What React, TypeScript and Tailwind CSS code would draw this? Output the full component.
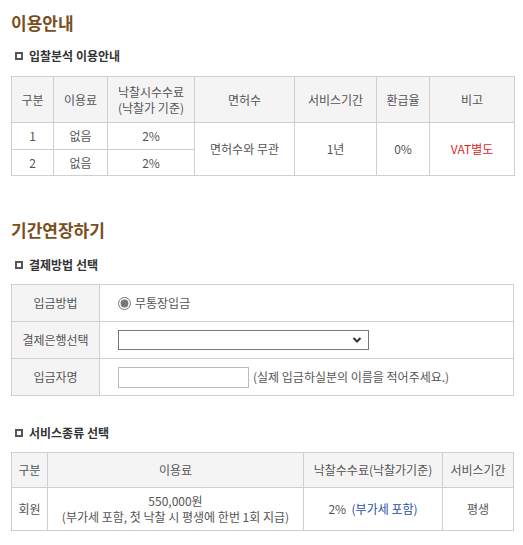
import React from 'react';

const th = 'border border-[#cfcfcf] bg-[#f4f4f4] font-normal text-[#555] text-center';
const td = 'border border-[#cfcfcf] text-[#555] text-center';

function SubTitle({ children }: { children: React.ReactNode }) {
  return (
    <div className="flex items-center gap-[6px] pl-[4px] text-[12px] font-bold text-[#333]">
      <span className="inline-block h-[8px] w-[8px] border-2 border-[#555]" />
      {children}
    </div>
  );
}

function Title({ children }: { children: React.ReactNode }) {
  return <h2 className="text-[17px] font-bold leading-[24px] text-[#7a4f1c]">{children}</h2>;
}

export default function App() {
  return (
    <div
      className="w-[523px] h-[545px] bg-white px-[11px] text-[12px]"
      style={{ fontFamily: '"Noto Sans CJK KR", "Noto Sans", sans-serif' }}
    >
      <div className="pt-[11px]">
        <Title>이용안내</Title>
      </div>
      <div className="mt-[12px]">
        <SubTitle>입찰분석 이용안내</SubTitle>
      </div>
      <table className="mt-[11px] w-[503px] border-collapse table-fixed">
        <colgroup>
          <col className="w-[42px]" />
          <col className="w-[54px]" />
          <col className="w-[87px]" />
          <col className="w-[100px]" />
          <col className="w-[82px]" />
          <col className="w-[53px]" />
          <col className="w-[85px]" />
        </colgroup>
        <thead>
          <tr className="h-[46px]">
            <th className={th}>구분</th>
            <th className={th}>이용료</th>
            <th className={`${th} leading-[16px]`}>
              낙찰시수수료
              <br />
              (낙찰가 기준)
            </th>
            <th className={th}>면허수</th>
            <th className={th}>서비스기간</th>
            <th className={th}>환급율</th>
            <th className={th}>비고</th>
          </tr>
        </thead>
        <tbody>
          <tr className="h-[27px]">
            <td className={td}>1</td>
            <td className={td}>없음</td>
            <td className={td}>2%</td>
            <td className={td} rowSpan={2}>면허수와 무관</td>
            <td className={td} rowSpan={2}>1년</td>
            <td className={td} rowSpan={2}>0%</td>
            <td className={`${td} text-[#e0262b]`} rowSpan={2}>VAT별도</td>
          </tr>
          <tr className="h-[26px]">
            <td className={td}>2</td>
            <td className={td}>없음</td>
            <td className={td}>2%</td>
          </tr>
        </tbody>
      </table>

      <div className="mt-[42px]">
        <Title>기간연장하기</Title>
      </div>
      <div className="mt-[14px]">
        <SubTitle>결제방법 선택</SubTitle>
      </div>
      <table className="mt-[10px] w-[503px] border-collapse table-fixed">
        <colgroup>
          <col className="w-[88px]" />
          <col />
        </colgroup>
        <tbody>
          <tr className="h-[37px]">
            <td className={th}>입금방법</td>
            <td className="border border-[#cfcfcf] pl-[18px] text-[#555]">
              <label className="flex items-center gap-[4px]">
                <input type="radio" defaultChecked className="m-0 h-[13px] w-[13px] accent-[#777]" />
                무통장입금
              </label>
            </td>
          </tr>
          <tr className="h-[37px]">
            <td className={th}>결제은행선택</td>
            <td className="border border-[#cfcfcf] pl-[18px]">
              <div className="relative h-[20px] w-[251px] border border-[#767676] bg-white">
                <svg
                  className="absolute right-[6px] top-[5px]"
                  width="10"
                  height="8"
                  viewBox="0 0 10 8"
                >
                  <path d="M1.5 2 L5 5.5 L8.5 2" stroke="#333" strokeWidth="2" fill="none" />
                </svg>
              </div>
            </td>
          </tr>
          <tr className="h-[37px]">
            <td className={th}>입금자명</td>
            <td className="border border-[#cfcfcf] pl-[18px] text-[#555]">
              <div className="flex items-center gap-[4px]">
                <input
                  type="text"
                  className="h-[21px] w-[131px] border border-[#bbb] bg-white outline-none"
                />
                <span>(실제 입금하실분의 이름을 적어주세요.)</span>
              </div>
            </td>
          </tr>
        </tbody>
      </table>

      <div className="mt-[28px]">
        <SubTitle>서비스종류 선택</SubTitle>
      </div>
      <table className="mt-[10px] w-[503px] border-collapse table-fixed">
        <colgroup>
          <col className="w-[36px]" />
          <col className="w-[256px]" />
          <col className="w-[139px]" />
          <col />
        </colgroup>
        <thead>
          <tr className="h-[35px]">
            <th className={th}>구분</th>
            <th className={th}>이용료</th>
            <th className={th}>낙찰수수료(낙찰가기준)</th>
            <th className={th}>서비스기간</th>
          </tr>
        </thead>
        <tbody>
          <tr className="h-[43px]">
            <td className={td}>회원</td>
            <td className={`${td} leading-[16px]`}>
              550,000원
              <br />
              (부가세 포함, 첫 낙찰 시 평생에 한번 1회 지급)
            </td>
            <td className={td}>
              2%&nbsp;&nbsp;<span className="text-[#1f4fa8]">(부가세 포함)</span>
            </td>
            <td className={td}>평생</td>
          </tr>
        </tbody>
      </table>
    </div>
  );
}
